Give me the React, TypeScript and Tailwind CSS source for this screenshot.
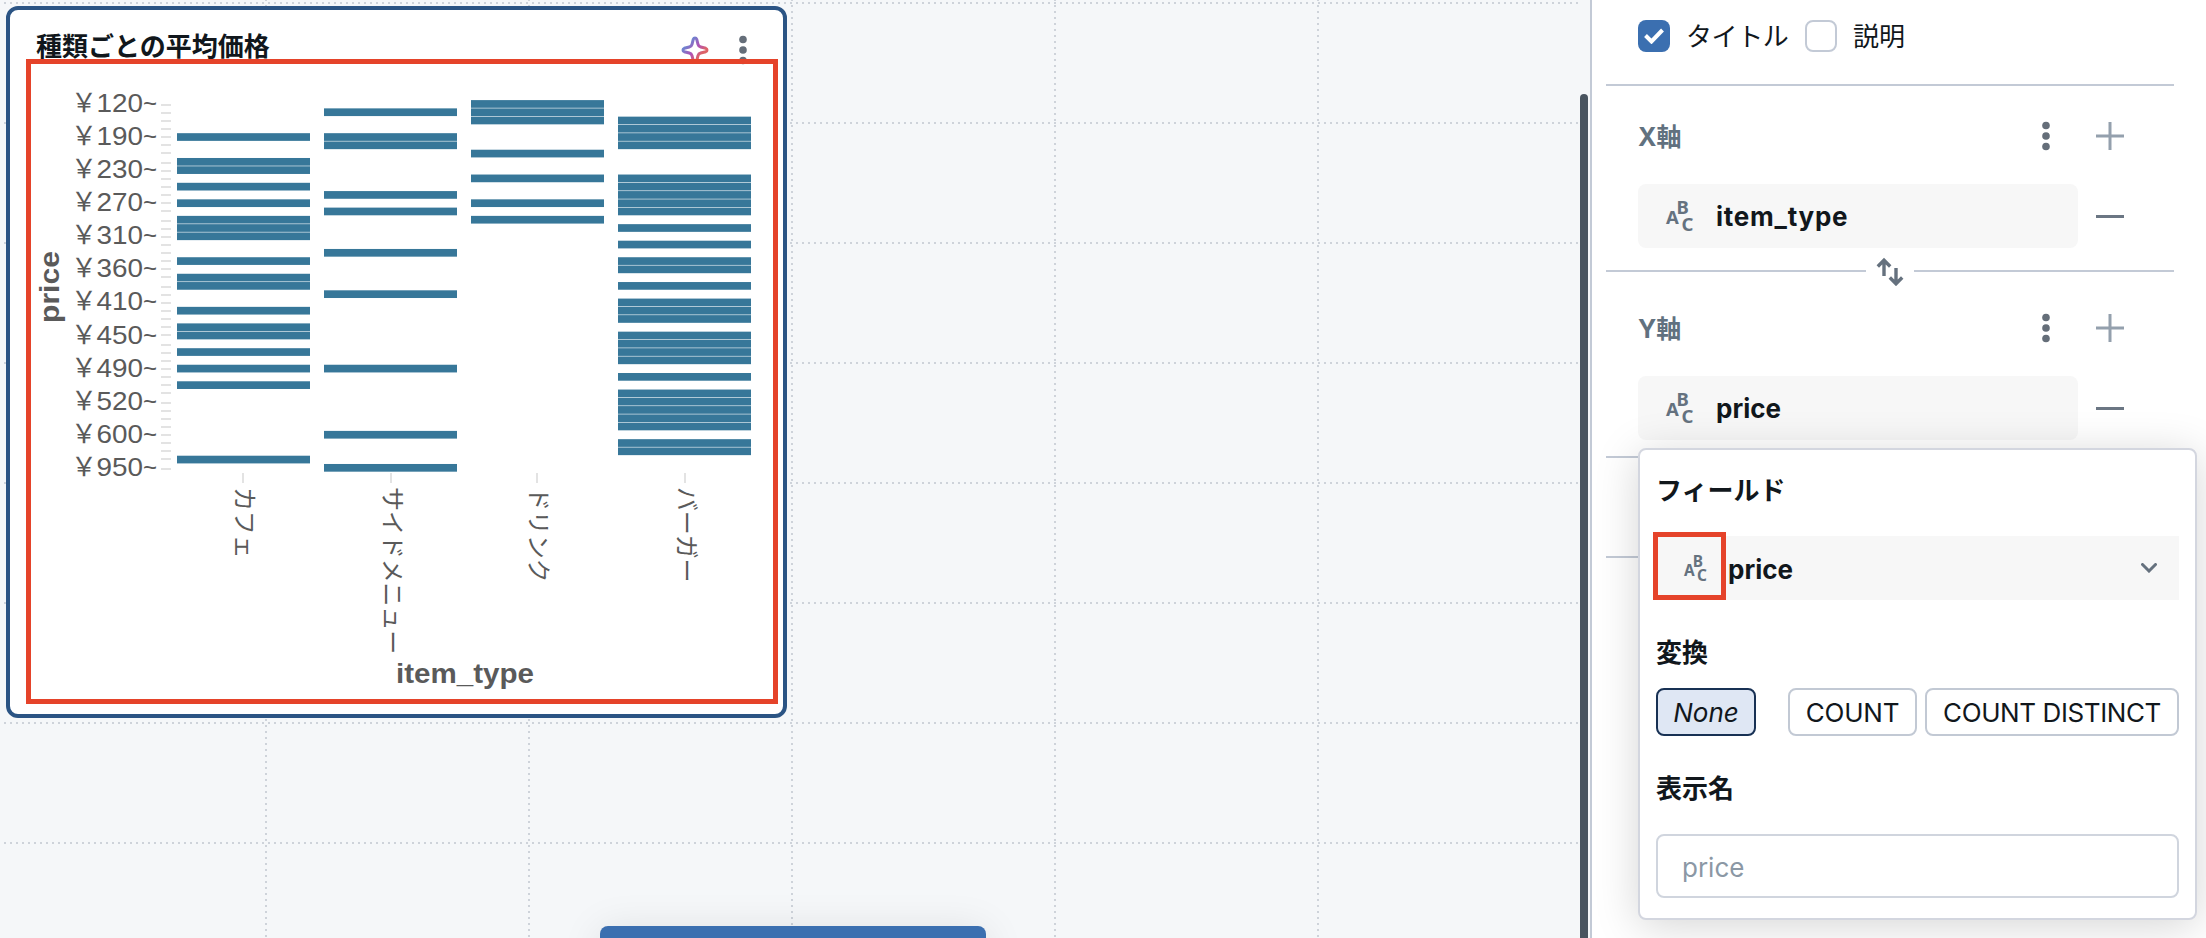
import React from "react";

const ROW = 8.27;
const SERIES: { name: string; x: number; tick: number; rows: number[] }[] = [
  { name: "カフェ", x: 177, tick: 243, rows: [4, 7, 8, 10, 12, 14, 15, 16, 19, 21, 22, 25, 27, 28, 30, 32, 34, 43] },
  { name: "サイドメニュー", x: 324, tick: 391, rows: [1, 4, 5, 11, 13, 18, 23, 32, 40, 44] },
  { name: "ドリンク", x: 471, tick: 537, rows: [0, 1, 2, 6, 9, 12, 14] },
  {
    name: "バーガー",
    x: 618,
    tick: 685,
    rows: [2, 3, 4, 5, 9, 10, 11, 12, 13, 15, 17, 19, 20, 22, 24, 25, 26, 28, 29, 30, 31, 33, 35, 36, 37, 38, 39, 41, 42],
  },
];
const PRICES = ["120", "190", "230", "270", "310", "360", "410", "450", "490", "520", "600", "950"];

function GridLines() {
  return (
    <svg className="absolute inset-0" width="1580" height="938" stroke="#ced3da" strokeWidth="2" strokeDasharray="2 4">
      {[0, 1, 2, 3, 4, 5, 6, 7].map((i) => (
        <line key={i} x1="4" x2="1579" y1={3 + i * 120} y2={3 + i * 120} />
      ))}
      {[266, 529, 792, 1055, 1318].map((x) => (
        <line key={x} x1={x} x2={x} y1="-1" y2="938" />
      ))}
    </svg>
  );
}

function Chart() {
  return (
    <svg width="773" height="654" viewBox="10 60 773 654" fontFamily="'Liberation Sans', 'Noto Sans CJK JP', sans-serif" fill="#5a5a5a">
      {PRICES.map((p, i) => (
        <g key={p} fontSize="26">
          <text x="71" y={112 + i * 4 * ROW} fontFamily="'Noto Sans CJK JP', sans-serif">
            ￥
          </text>
          <text x="96.5" y={112 + i * 4 * ROW} textLength="46.5" lengthAdjust="spacingAndGlyphs">
            {p}
          </text>
          <text x="143" y={112 + i * 4 * ROW} textLength="14" lengthAdjust="spacingAndGlyphs">
            ~
          </text>
        </g>
      ))}
      {Array.from({ length: 45 }, (_, i) => (
        <rect key={i} x="161" y={Math.floor((104.3 + ROW * i) / 2) * 2} width="10" height="2" fill="#e3e3e3" />
      ))}
      {SERIES.map((s) => (
        <g key={s.name}>
          {s.rows.map((r) => (
            <rect key={r} x={s.x} y={100.1 + ROW * r} width="133" height="7.7" fill="#377799" />
          ))}
          <rect x={s.tick - 1} y="473" width="2" height="10" fill="#e3e3e3" />
          <text
            transform={`translate(${s.tick - 7} 487) rotate(90)`}
            fontSize="24"
            fontFamily="'Noto Sans CJK JP', sans-serif"
            textLength={s.name.length * 23.9}
          >
            {s.name}
          </text>
        </g>
      ))}
      <text x="396" y="683" fontSize="28" fontWeight="700" textLength="138" lengthAdjust="spacingAndGlyphs">
        item_type
      </text>
      <text transform="translate(59 323) rotate(-90)" fontSize="28" fontWeight="700" textLength="72" lengthAdjust="spacingAndGlyphs">
        price
      </text>
    </svg>
  );
}

function Kebab() {
  return (
    <svg width="8" height="32" viewBox="0 0 8 32" fill="#656e79">
      <circle cx="4" cy="5.5" r="3.8" />
      <circle cx="4" cy="16" r="3.8" />
      <circle cx="4" cy="26.5" r="3.8" />
    </svg>
  );
}

function Sparkle() {
  return (
    <svg width="28" height="28" viewBox="0 0 28 28" fill="none">
      <defs>
        <linearGradient id="spark" x1="3" y1="4" x2="25" y2="24" gradientUnits="userSpaceOnUse">
          <stop offset="0.15" stopColor="#6a86d2" />
          <stop offset="0.5" stopColor="#b052b4" />
          <stop offset="0.75" stopColor="#dd6468" />
        </linearGradient>
      </defs>
      <path
        d="M12.3 3.2C12.9 1.6 15.1 1.6 15.7 3.2L17 8.3C17.4 9.8 18.2 10.6 19.7 11L24.8 12.3C26.4 12.9 26.4 15.1 24.8 15.7L19.7 17C18.2 17.4 17.4 18.2 17 19.7L15.7 24.8C15.1 26.4 12.9 26.4 12.3 24.8L11 19.7C10.6 18.2 9.8 17.4 8.3 17L3.2 15.7C1.6 15.1 1.6 12.9 3.2 12.3L8.3 11C9.8 10.6 10.6 9.8 11 8.3Z"
        stroke="url(#spark)"
        strokeWidth="3"
        strokeLinejoin="round"
      />
    </svg>
  );
}

function AbcIcon({ size }: { size: number }) {
  return (
    <svg
      width={size}
      height={size}
      viewBox="0 0 30 30"
      fill="#65727f"
      className="shrink-0 overflow-visible"
      fontFamily="'Noto Sans', sans-serif"
      fontWeight="700"
      fontSize="18.5"
    >
      <text x="0" y="23.4">A</text>
      <text x="10.4" y="13.2">B</text>
      <text x="15.5" y="29.7">C</text>
    </svg>
  );
}

function AxisSection({ label, field, fieldClass }: { label: string; field: string; fieldClass: string }) {
  return (
    <div className="flex h-[184px] w-[568px] flex-col pl-8">
      <div className="flex h-[98px] items-center pt-px">
        <span className="w-[404px] pt-[2px] text-[25px] font-bold text-[#61717f]">{label}</span>
        <Kebab />
        <svg className="ml-[46px]" width="28" height="28" stroke="#94a0ad" strokeWidth="3">
          <path d="M0 14H28M14 0V28" />
        </svg>
      </div>
      <div className="flex items-center">
        <div className="flex h-16 w-[440px] items-center rounded-lg bg-[#f7f7f7] pl-7">
          <AbcIcon size={30} />
          <span className={`ml-5 pt-[2px] text-[26px] font-bold ${fieldClass}`}>{field}</span>
        </div>
        <div className="ml-[18px] h-[3px] w-7 bg-[#6b7683]" />
      </div>
    </div>
  );
}

function Popover() {
  return (
    <div className="absolute top-[448px] left-[46px] flex h-[472px] w-[559px] flex-col rounded-lg border-2 border-[#d3d6df] bg-white px-4 shadow-[0_6px_44px_rgba(0,0,0,0.17)]">
      <div className="flex h-[86px] items-center pb-[5px] font-bold">フィールド</div>
      <div className="relative flex h-16 items-center bg-[#f7f7f7] pr-[22px]">
        <div className="ml-7">
          <AbcIcon size={25} />
        </div>
        <span className="ml-[19px] flex-1 pt-[3px] font-bold">price</span>
        <svg width="16" height="10" viewBox="0 0 16 10" fill="none" stroke="#65717e" strokeWidth="3" strokeLinecap="round">
          <path d="M1.5 1.5L8 8L14.5 1.5" />
        </svg>
        <div className="absolute -top-1 -left-[3px] h-[68px] w-[73px] border-5 border-[#e5432a]" />
      </div>
      <div className="flex h-[88px] items-center pt-[17px] font-bold">変換</div>
      <div className="flex h-12 leading-[46px]">
        <button className="w-[100px] rounded-lg border-2 border-[#183154] bg-[#dfe7f4] italic">None</button>
        <button className="ml-8 w-[129px] rounded-lg border-2 border-[#c2c9d4] tracking-[-0.2px]">COUNT</button>
        <button className="ml-2 w-[254px] rounded-lg border-2 border-[#c2c9d4] tracking-[-0.4px] whitespace-nowrap">COUNT DISTINCT</button>
      </div>
      <div className="flex h-[98px] items-center pt-[7px] font-bold">表示名</div>
      <div className="flex h-16 items-center rounded-lg border-2 border-[#d0d5de] pt-[3px] pl-6 text-[#8b98a5]">price</div>
    </div>
  );
}

export default function App() {
  return (
    <div className="flex h-[938px] w-[2206px] overflow-hidden bg-white font-[Inter,'Noto_Sans_CJK_JP',sans-serif] text-[26px] leading-9 text-[#11171c]">
      <main className="relative h-full w-[1590px] overflow-hidden bg-[#f5f7f9]">
        <GridLines />
        <section className="absolute top-[6px] left-[6px] flex h-[712px] w-[781px] flex-col rounded-xl border-4 border-[#2b5484] bg-white">
          <header className="flex h-[50px] shrink-0 items-start justify-between pt-[18px] pr-9 pl-[26px]">
            <h2 className="pt-px text-[26px] leading-9 font-bold">種類ごとの平均価格</h2>
            <div className="flex items-center gap-[30px] pt-[6px]">
              <Sparkle />
              <Kebab />
            </div>
          </header>
          <Chart />
          <div className="absolute top-[49px] left-4 h-[645px] w-[752px] border-5 border-[#e5432a]" />
        </section>
        <div className="absolute top-[926px] left-[600px] h-20 w-[386px] rounded-lg bg-[#3b6fb0] shadow-[0_4px_40px_rgba(0,0,0,0.1)]" />
        <div className="absolute top-[94px] right-[2px] h-[860px] w-2 rounded-full bg-[#49545f]" />
      </main>
      <aside className="relative flex h-full w-[616px] flex-col border-l-2 border-[#c3cad6] pl-[14px]">
        <div className="flex h-[84px] items-center pb-3 pl-8">
          <div className="flex size-8 items-center justify-center rounded-lg bg-[#3b6fb0]">
            <svg width="20" height="16" viewBox="0 0 20 16" fill="none" stroke="#fff" strokeWidth="4">
              <path d="M1.5 7.5L7.5 13.5L18.5 2" />
            </svg>
          </div>
          <span className="ml-4 w-[119px] pt-[2px] tracking-[-0.4px] whitespace-nowrap">タイトル</span>
          <div className="size-8 rounded-lg border-2 border-[#c3cad6]" />
          <span className="ml-4 pt-[2px]">説明</span>
        </div>
        <div className="h-[2px] w-[568px] bg-[#c3cad6]" />
        <AxisSection label="X軸" field="item_type" fieldClass="tracking-[0.75px]" />
        <div className="flex h-[2px] w-[568px] items-center justify-between">
          <div className="h-[2px] w-[260px] bg-[#c3cad6]" />
          <svg className="shrink-0" width="28" height="30" viewBox="0 0 28 30" fill="none" stroke="#65717e" strokeWidth="3.4">
            <path d="M8 20V4M1.8 10.5L8 4.2L14.2 10.5" />
            <path d="M20 12V28M13.8 21.5L20 27.8L26.2 21.5" />
          </svg>
          <div className="h-[2px] w-[260px] bg-[#c3cad6]" />
        </div>
        <div className="pt-[6px]">
          <AxisSection label="Y軸" field="price" fieldClass="tracking-normal" />
        </div>
        <div className="mt-[-6px] h-[2px] w-[568px] bg-[#c3cad6]" />
        <div className="mt-[98px] h-[2px] w-[568px] bg-[#c3cad6]" />
        <Popover />
      </aside>
    </div>
  );
}
